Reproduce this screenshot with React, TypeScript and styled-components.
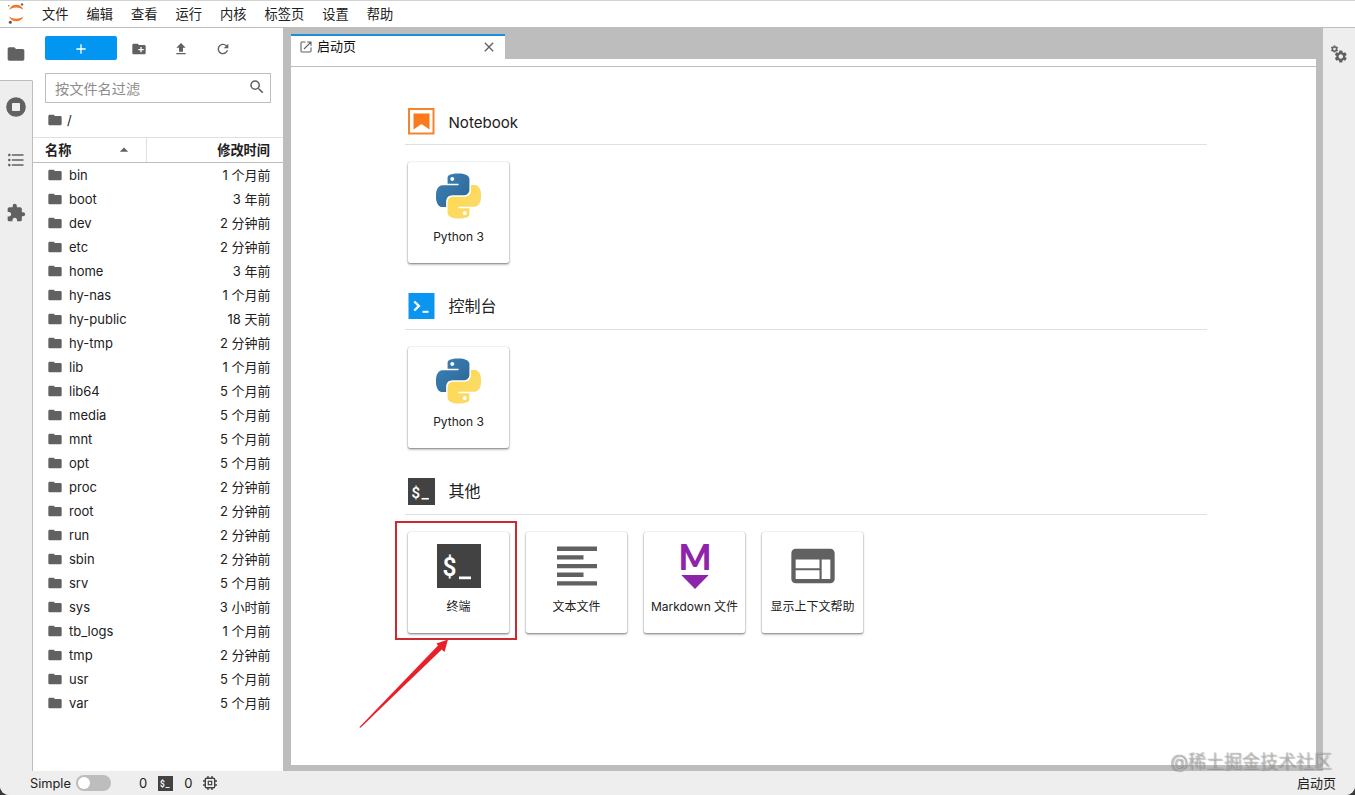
import React from "react";
import styled, { createGlobalStyle } from "styled-components";
import {
  MdFolder, MdCreateNewFolder, MdFileUpload, MdRefresh, MdSearch, MdFormatListBulleted,
  MdExtension, MdWeb, MdSettings, MdClose, MdArrowDropUp, MdAdd,
} from "react-icons/md";

const GlobalStyle = createGlobalStyle`
  * { box-sizing: border-box; }
  body {
    margin: 0;
    background: #3a3a3c;
    font-family: Inter, "Noto Sans CJK SC", sans-serif;
    font-size: 13px;
    color: #212121;
  }
  svg { display: block; flex: none; }
`;

const Shell = styled.div`
  position: relative;
  display: flex;
  flex-direction: column;
  width: 1355px;
  height: 795px;
  overflow: hidden;
  background: #eee;
  border-radius: 0 0 9px 9px;
`;

const MenuBar = styled.header`
  display: flex;
  align-items: center;
  height: 28px;
  flex: none;
  background: #fff;
  border-top: 1px solid #d2d2d2;
  border-bottom: 1px solid #bdbdbd;
`;

const Logo = styled.svg`
  margin-right: 9px;
`;

const MenuItem = styled.span`
  padding: 0 9px;
  line-height: 26px;
  font-size: 13.25px;
`;

const Workspace = styled.div`
  display: flex;
  flex: 1;
  min-height: 0;
`;

const SideBar = styled.nav`
  display: flex;
  flex-direction: column;
  width: 33px;
  flex: none;
  color: #616161;
  background: #eee;
`;

const SideTab = styled.div<{ $active?: boolean }>`
  display: flex;
  align-items: center;
  justify-content: center;
  height: 53px;
  flex: none;
  padding-bottom: ${(p) => (p.$active ? 0 : 2)}px;
  background: ${(p) => (p.$active ? "#fff" : "#eee")};
  border-right: 1px solid ${(p) => (p.$active ? "#fff" : "#bdbdbd")};
  border-bottom: ${(p) => (p.$active ? "1px solid #bdbdbd" : "none")};
`;

const SideRest = styled.div`
  flex: 1;
  border-right: 1px solid #bdbdbd;
`;

const Browser = styled.aside`
  display: flex;
  flex-direction: column;
  width: 250px;
  flex: none;
  background: #fff;
`;

const Toolbar = styled.div`
  display: flex;
  align-items: center;
  height: 24px;
  margin: 8px 12px 0;
  color: #616161;
`;

const NewButton = styled.button`
  display: flex;
  align-items: center;
  justify-content: center;
  width: 72px;
  height: 24px;
  border: 0;
  border-radius: 2px;
  color: #fff;
  background: #0296f0;
  padding: 2px 0 0;
`;

const ToolSlot = styled.div`
  display: flex;
  justify-content: center;
  width: 42px;
  padding-top: 2px;
  &:first-of-type { margin-left: 1px; }
`;

const FilterBox = styled.div`
  display: flex;
  align-items: center;
  justify-content: space-between;
  height: 30px;
  margin: 13px 12px 0;
  padding: 0 4px 0 9px;
  border: 1px solid #bdbdbd;
  color: #8d8d8d;
  font-size: 14.2px;
  svg { color: #616161; margin-top: -2px; }
`;

const Crumbs = styled.div`
  display: flex;
  align-items: center;
  gap: 4px;
  height: 34px;
  padding-left: 14px;
  svg { color: #616161; }
`;

const ListHeader = styled.div`
  display: flex;
  height: 26px;
  border-top: 1px solid #e0e0e0;
  border-bottom: 1px solid #bdbdbd;
  font-weight: 600;
  font-size: 13.2px;
  line-height: 24px;
`;

const NameHead = styled.div`
  display: flex;
  align-items: center;
  justify-content: space-between;
  width: 114px;
  padding: 0 12px;
  border-right: 1px solid #e0e0e0;
  svg { color: #616161; }
`;

const TimeHead = styled.div`
  flex: 1;
  padding-right: 13px;
  text-align: right;
`;

const FileRow = styled.div`
  display: flex;
  align-items: center;
  height: 24px;
  padding: 0 12.500px 0 14px;
  line-height: 24px;
  svg { color: #616161; }
`;

const FileName = styled.span`
  flex: 1;
  margin-left: 6px;
`;

const Dock = styled.main`
  display: flex;
  flex-direction: column;
  flex: 1;
  padding: 6px 7px 6px 8px;
  background: #bdbdbd;
`;

const DockTabs = styled.div`
  height: 25px;
  flex: none;
`;

const DockTab = styled.div`
  display: flex;
  align-items: center;
  width: 214px;
  height: 25px;
  padding: 0 8px 2px 9px;
  background: #fff;
  border-top: 2px solid #1a90d6;
  color: #111;
  svg { color: #616161; }
`;

const TabLabel = styled.span`
  flex: 1;
  margin: -2px 0 0 5px;
  line-height: 20px;
`;

const DockStrip = styled.div`
  height: 8px;
  flex: none;
  background: #fff;
  border-bottom: 1px solid #bdbdbd;
`;

const Launcher = styled.div`
  flex: 1;
  padding: 40px 109px 0 114px;
  background: #fff;
`;

const Section = styled.section`
  height: 185px;
`;

const SectionHead = styled.div`
  display: flex;
  align-items: center;
  height: 38px;
  padding: 0 0 8px 2.500px;
  border-bottom: 1px solid #e0e0e0;
`;

const SectionTitle = styled.h2<{ $latin?: boolean }>`
  margin: ${(p) => (p.$latin ? "2px" : "-2px")} 0 0 14px;
  font-size: ${(p) => (p.$latin ? 15.1 : 16)}px;
  font-weight: 400;
  line-height: 28px;
`;

const Cards = styled.div`
  display: flex;
  gap: 17px;
  padding: 17px 0 0 3px;
`;

const Card = styled.div`
  display: flex;
  flex-direction: column;
  align-items: center;
  width: 101px;
  height: 101px;
  border-radius: 2px;
  background: #fff;
  box-shadow: 0 1px 2px rgba(0, 0, 0, 0.4), 0 0 1px rgba(0, 0, 0, 0.32), 0 2px 3px rgba(0, 0, 0, 0.12);
`;

const CardIcon = styled.div`
  display: flex;
  align-items: center;
  justify-content: center;
  height: 65px;
  padding-top: 3px;
  color: #616161;
`;

const CardLabel = styled.span`
  font-size: 12px;
  line-height: 20px;
  white-space: nowrap;
`;

const RightBar = styled.aside`
  display: flex;
  justify-content: center;
  width: 32px;
  flex: none;
  padding-top: 16px;
  background: #eee;
  color: #616161;
`;

const StatusBar = styled.footer`
  display: flex;
  align-items: center;
  height: 24px;
  flex: none;
  padding: 0 19px 0 30px;
  background: #eee;
`;

const Switch = styled.span`
  width: 35px;
  height: 16px;
  margin: 0 28px 0 5px;
  padding: 2px;
  border-radius: 8px;
  background: #bdbdbd;
`;

const Knob = styled.span`
  display: block;
  width: 12px;
  height: 12px;
  border-radius: 50%;
  background: #fff;
`;

const StatusLabel = styled.span`
  font-size: 12.8px;
`;

const StatusGroup = styled.span`
  display: flex;
  align-items: center;
  gap: 11px;
  svg { color: #424242; }
`;

const StatusRight = styled.span`
  margin: -2px 0 0 auto;
`;

const Highlight = styled.div`
  position: absolute;
  left: 395px;
  top: 521px;
  width: 122px;
  height: 119px;
  border: 2px solid #cb2a31;
`;

const Arrow = styled.svg`
  position: absolute;
  left: 355px;
  top: 635px;
`;

const Watermark = styled.div`
  position: absolute;
  right: 23px;
  top: 749px;
  font-size: 18px;
  line-height: 26px;
  font-weight: 300;
  color: rgba(235, 235, 235, 0.6);
  text-shadow: 0 0 1px rgba(0, 0, 0, 0.6), 1px 1px 1px rgba(0, 0, 0, 0.22);
`;

const JupyterLogo = () => (
  <Logo width="24" height="26" viewBox="0 1 24 26">
    <path d="M9 9.900C10.200 6.700 13 4.800 16.200 4.800S22.300 6.700 23.500 9.900C21.800 8.300 19.300 7.400 16.200 7.400S10.700 8.300 9 9.900Z" fill="#f37726" />
    <path d="M9 16.300C10.200 19.500 13 21.300 16.200 21.300S22.300 19.500 23.500 16.300C21.800 17.900 19.300 18.800 16.200 18.800S10.700 17.900 9 16.300Z" fill="#f37726" />
    <circle cx="8.800" cy="5.800" r=".8" fill="#777" />
    <circle cx="22" cy="4.400" r="1.200" fill="#666" />
    <circle cx="10.300" cy="22.300" r="1.500" fill="#555" />
  </Logo>
);

const PythonLogo = ({ id }: { id: string }) => (
  <svg width="45" height="46" viewBox="0 0 24 24">
    <defs>
      <linearGradient id={`${id}-b`} x1="0" y1="0" x2="1" y2="1">
        <stop offset="0" stopColor="#3d83b8" />
        <stop offset="1" stopColor="#2b6493" />
      </linearGradient>
      <linearGradient id={`${id}-y`} x1="0" y1="0" x2="1" y2="1">
        <stop offset="0" stopColor="#ffd84a" />
        <stop offset="1" stopColor="#f9dc72" />
      </linearGradient>
    </defs>
    <path fill={`url(#${id}-b)`} d="M14.25.18l.9.2.73.26.59.3.45.32.34.34.25.34.16.33.1.3.04.26.02.2-.01.13V8.5l-.05.63-.13.55-.21.46-.26.38-.3.31-.33.25-.35.19-.35.14-.33.1-.3.07-.26.04-.21.02H8.77l-.69.05-.59.14-.5.22-.41.27-.33.32-.27.35-.2.36-.15.37-.1.35-.07.32-.04.27-.02.21v3.06H3.17l-.21-.03-.28-.07-.32-.12-.35-.18-.36-.26-.36-.36-.35-.46-.32-.59-.28-.73-.21-.88-.14-1.05-.05-1.23.06-1.22.16-1.04.24-.87.32-.71.36-.57.4-.44.42-.33.42-.24.4-.16.36-.1.32-.05.24-.01h.16l.06.01h8.16v-.83H6.18l-.01-2.75-.02-.37.05-.34.11-.31.17-.28.25-.26.31-.23.38-.2.44-.18.51-.15.58-.12.64-.1.71-.06.77-.04.84-.02 1.27.05zm-6.3 1.98l-.23.33-.08.41.08.41.23.34.33.22.41.09.41-.09.33-.22.23-.34.08-.41-.08-.41-.23-.33-.33-.22-.41-.09-.41.09z" />
    <path fill={`url(#${id}-y)`} d="M21.04 6.11l.28.06.32.12.35.18.36.27.36.35.35.47.32.59.28.73.21.88.14 1.04.05 1.23-.06 1.23-.16 1.04-.24.86-.32.71-.36.57-.4.45-.42.33-.42.24-.4.16-.36.09-.32.05-.24.02-.16-.01h-8.22v.82h5.84l.01 2.76.02.36-.05.34-.11.31-.17.29-.25.25-.31.24-.38.2-.44.17-.51.15-.58.13-.64.09-.71.07-.77.04-.84.01-1.27-.04-1.07-.14-.9-.2-.73-.25-.59-.3-.45-.33-.34-.34-.25-.34-.16-.33-.1-.3-.04-.25-.02-.2.01-.13v-5.34l.05-.64.13-.54.21-.46.26-.38.3-.32.33-.24.35-.2.35-.14.33-.1.3-.06.26-.04.21-.02.13-.01h5.84l.69-.05.59-.14.5-.21.41-.28.33-.32.27-.35.2-.36.15-.36.1-.35.07-.32.04-.28.02-.21V6.07h2.09l.14.01zM14.57 20.36l-.23.33-.08.41.08.41.23.33.33.23.41.08.41-.08.33-.23.23-.33.08-.41-.08-.41-.23-.33-.33-.23-.41-.08-.41.08z" />
  </svg>
);

const NotebookIcon = () => (
  <svg width="27" height="27" viewBox="0 0 27 27">
    <rect x="1" y="1" width="24.500" height="24.500" fill="#fff" stroke="#f5842f" strokeWidth="2" />
    <path d="M5.500 5.500H21.500V21.500L13.500 16L5.500 21.500Z" fill="#fb7a1c" />
  </svg>
);

const ConsoleIcon = () => (
  <svg width="27" height="27" viewBox="0 0 27 27">
    <rect x="0.500" width="26" height="26" fill="#0a96f0" />
    <path d="M6.300 8.500L10.900 13L6.300 17.500" fill="none" stroke="#fff" strokeWidth="2.400" />
    <path d="M14.500 18.800H20.500" stroke="#fff" strokeWidth="2" />
  </svg>
);

const TerminalIcon = ({ size }: { size: number }) => (
  <svg width={size} height={size} viewBox="0 0 44 44">
    <rect width="44" height="44" fill="#424242" />
    <text x="5.500" y="32" fontFamily="Roboto, sans-serif" fontSize="25" fontWeight="600" fill="#fff" textLength="14" lengthAdjust="spacingAndGlyphs">$</text>
    <rect x="22" y="32.500" width="12" height="2.700" fill="#fff" />
  </svg>
);

const TextIcon = () => (
  <svg width="40" height="40" viewBox="0 0 40 40">
    <path d="M0 .5H40V4.900H0ZM0 9.200H26.500V13.600H0ZM0 17.900H40V22.300H0ZM0 26.600H26.500V31H0ZM0 35.200H40V39.600H0Z" fill="#616161" />
  </svg>
);

const MarkdownIcon = () => (
  <svg width="42" height="80" viewBox="-5 -15 42 80">
    <text x="-.5" y="28.500" fontFamily="Lato, sans-serif" fontSize="36.500" fontWeight="900" fill="#8e24aa" textLength="33" lengthAdjust="spacingAndGlyphs">M</text>
    <path d="M2.300 34H29.700L16 48Z" fill="#8e24aa" />
  </svg>
);

const StopIcon = () => (
  <svg width="20" height="20" viewBox="0 0 20 20">
    <circle cx="10" cy="10" r="9.800" fill="#616161" />
    <rect x="6" y="6" width="8" height="8" rx=".8" fill="#eee" />
  </svg>
);

const LaunchIcon = () => (
  <svg width="12" height="12" viewBox="0 0 12 12" fill="none" stroke="#616161" strokeWidth="1.100">
    <path d="M5.500 1H1.900Q1 1 1 1.900V10.100Q1 11 1.900 11H10.100Q11 11 11 10.100V6.500M7.200 1H11V4.800M11 1L4 8" />
  </svg>
);

const ChipIcon = () => (
  <svg width="14" height="14" viewBox="0 0 14 14" fill="none" stroke="#424242" strokeWidth="1.400">
    <rect x="2.300" y="2.300" width="9.400" height="9.400" rx="1.200" />
    <rect x="5.300" y="5.300" width="3.400" height="3.400" strokeWidth="1.200" />
    <path d="M5 0V2M9 0V2M5 12V14M9 12V14M0 5H2M0 9H2M12 5H14M12 9H14" />
  </svg>
);

const GearsIcon = () => (
  <svg width="18" height="20" viewBox="0 0 18 20">
    <MdSettings size={9} x={0} y={0.5} />
    <MdSettings size={15} x={3.3} y={5} />
  </svg>
);

const menus = ["文件", "编辑", "查看", "运行", "内核", "标签页", "设置", "帮助"];

const files: [string, string][] = [
  ["bin", "1 个月前"], ["boot", "3 年前"], ["dev", "2 分钟前"], ["etc", "2 分钟前"],
  ["home", "3 年前"], ["hy-nas", "1 个月前"], ["hy-public", "18 天前"], ["hy-tmp", "2 分钟前"],
  ["lib", "1 个月前"], ["lib64", "5 个月前"], ["media", "5 个月前"], ["mnt", "5 个月前"],
  ["opt", "5 个月前"], ["proc", "2 分钟前"], ["root", "2 分钟前"], ["run", "2 分钟前"],
  ["sbin", "2 分钟前"], ["srv", "5 个月前"], ["sys", "3 小时前"], ["tb_logs", "1 个月前"],
  ["tmp", "2 分钟前"], ["usr", "5 个月前"], ["var", "5 个月前"],
];

type LauncherCard = { label: string; icon: React.ReactNode };
type LauncherSection = { title: string; latin?: boolean; icon: React.ReactNode; cards: LauncherCard[] };

const sections: LauncherSection[] = [
  { title: "Notebook", latin: true, icon: <NotebookIcon />, cards: [{ label: "Python 3", icon: <PythonLogo id="nb" /> }] },
  { title: "控制台", icon: <ConsoleIcon />, cards: [{ label: "Python 3", icon: <PythonLogo id="con" /> }] },
  {
    title: "其他",
    icon: <TerminalIcon size={27} />,
    cards: [
      { label: "终端", icon: <TerminalIcon size={44} /> },
      { label: "文本文件", icon: <TextIcon /> },
      { label: "Markdown 文件", icon: <MarkdownIcon /> },
      { label: "显示上下文帮助", icon: <MdWeb size={52} /> },
    ],
  },
];

export default function App() {
  return (
    <>
      <GlobalStyle />
      <Shell>
        <MenuBar>
          <JupyterLogo />
          {menus.map((m) => <MenuItem key={m}>{m}</MenuItem>)}
        </MenuBar>
        <Workspace>
          <SideBar>
            <SideTab $active><MdFolder size={20} /></SideTab>
            <SideTab><StopIcon /></SideTab>
            <SideTab><MdFormatListBulleted size={20} /></SideTab>
            <SideTab><MdExtension size={20} /></SideTab>
            <SideRest />
          </SideBar>
          <Browser>
            <Toolbar>
              <NewButton aria-label="New"><MdAdd size={16} /></NewButton>
              <ToolSlot><MdCreateNewFolder size={16} /></ToolSlot>
              <ToolSlot><MdFileUpload size={16} /></ToolSlot>
              <ToolSlot><MdRefresh size={16} /></ToolSlot>
            </Toolbar>
            <FilterBox>按文件名过滤<MdSearch size={18} /></FilterBox>
            <Crumbs><MdFolder size={16} />/</Crumbs>
            <ListHeader>
              <NameHead>名称<MdArrowDropUp size={20} /></NameHead>
              <TimeHead>修改时间</TimeHead>
            </ListHeader>
            {files.map(([name, time]) => (
              <FileRow key={name}>
                <MdFolder size={16} />
                <FileName>{name}</FileName>
                <span>{time}</span>
              </FileRow>
            ))}
          </Browser>
          <Dock>
            <DockTabs>
              <DockTab>
                <LaunchIcon />
                <TabLabel>启动页</TabLabel>
                <MdClose size={16} />
              </DockTab>
            </DockTabs>
            <DockStrip />
            <Launcher>
              {sections.map((s) => (
                <Section key={s.title}>
                  <SectionHead>
                    {s.icon}
                    <SectionTitle $latin={s.latin}>{s.title}</SectionTitle>
                  </SectionHead>
                  <Cards>
                    {s.cards.map((c) => (
                      <Card key={c.label}>
                        <CardIcon>{c.icon}</CardIcon>
                        <CardLabel>{c.label}</CardLabel>
                      </Card>
                    ))}
                  </Cards>
                </Section>
              ))}
            </Launcher>
          </Dock>
          <RightBar><GearsIcon /></RightBar>
        </Workspace>
        <StatusBar>
          <StatusLabel>Simple</StatusLabel>
          <Switch><Knob /></Switch>
          <StatusGroup>
            0<TerminalIcon size={15} /><span>0</span><ChipIcon />
          </StatusGroup>
          <StatusRight>启动页</StatusRight>
        </StatusBar>
        <Highlight />
        <Arrow width="95" height="95" viewBox="0 0 95 95">
          <path d="M4.300 92.300L83 10.500L81.500 8.500L93 4.500L89.500 17L86.800 14.500L5.500 92.800Z" fill="#e8202a" />
        </Arrow>
        <Watermark>@稀土掘金技术社区</Watermark>
      </Shell>
    </>
  );
}
